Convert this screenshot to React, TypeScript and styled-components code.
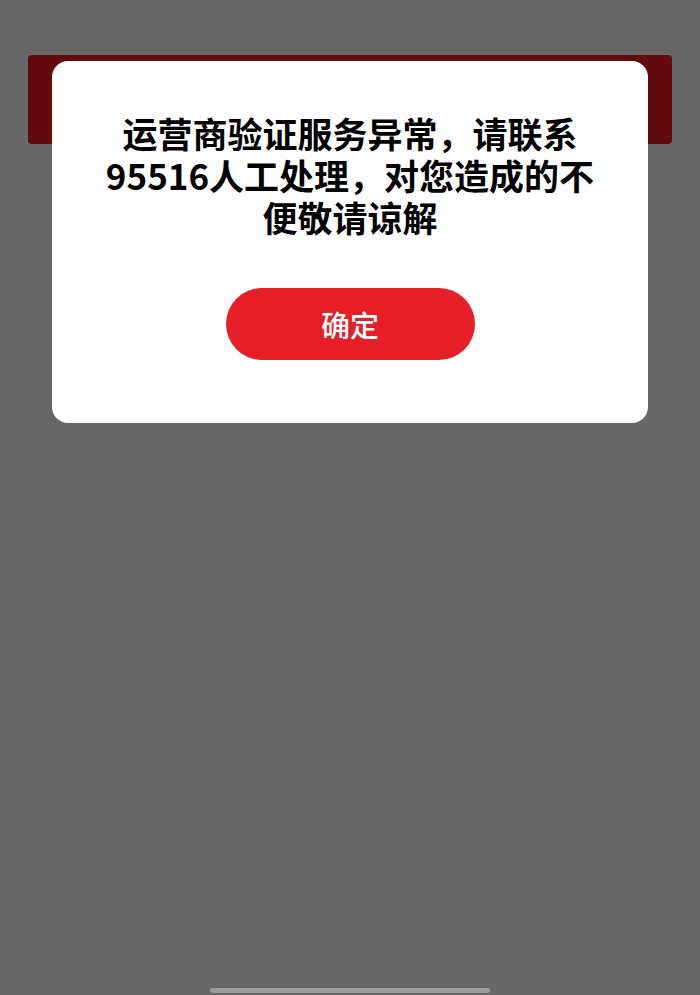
import { styled, createGlobalStyle } from "styled-components";

const GlobalStyle = createGlobalStyle`
  html, body {
    margin: 0;
    padding: 0;
    background: #676767;
  }

  body {
    font-family: "Noto Sans CJK SC", "Noto Sans", sans-serif;
  }
`;

export default function App() {
  return (
    <>
      <GlobalStyle />
      <Page>
        <HeaderBar />
        <Overlay>
          <Dialog role="alertdialog">
            <Message>
              运营商验证服务异常，请联系95516人工处理，对您造成的不便敬请谅解
            </Message>
            <ConfirmButton type="button">确定</ConfirmButton>
          </Dialog>
        </Overlay>
        <HomeIndicator />
      </Page>
    </>
  );
}

const Page = styled.div`
  position: relative;
  box-sizing: border-box;
  min-height: 995px;
  padding: 55px 28px 0;
  overflow: hidden;
`;

const HeaderBar = styled.div`
  height: 89px;
  border-radius: 4px;
  background: #620a0c;
`;

const Overlay = styled.div`
  position: absolute;
  inset: 0;
  display: flex;
  flex-flow: column;
  align-items: center;
  padding-top: 61px;
`;

const Dialog = styled.div`
  box-sizing: border-box;
  width: 596px;
  display: flex;
  flex-flow: column;
  align-items: center;
  padding: 51px 48px 63px;
  border-radius: 16px;
  background: #ffffff;
`;

const Message = styled.div`
  width: 100%;
  text-align: center;
  font: 700 35px/42px "Noto Sans CJK SC", sans-serif;
  color: #000000;
`;

const ConfirmButton = styled.button`
  margin-top: 50px;
  width: 249px;
  height: 72px;
  border: none;
  border-radius: 36px;
  background: #e61e25;
  color: #ffffff;
  font: 500 29px/1 "Noto Sans CJK SC", sans-serif;
  cursor: pointer;
`;

const HomeIndicator = styled.div`
  position: absolute;
  left: 210px;
  bottom: 2px;
  width: 280px;
  height: 5px;
  border-radius: 3px;
  background: #9c9c9c;
`;
